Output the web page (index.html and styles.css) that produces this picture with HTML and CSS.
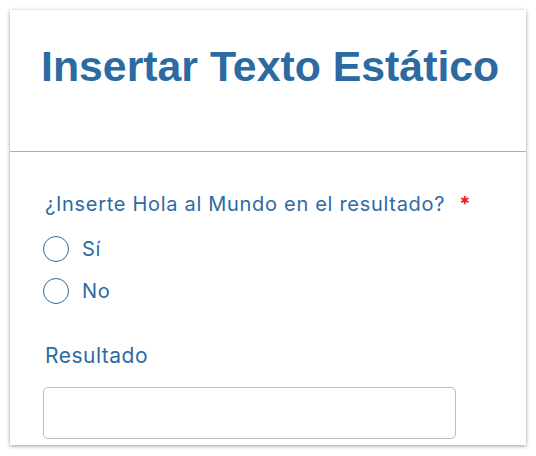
FILE: index.html
```html
<!DOCTYPE html>
<html lang="es">
<head>
<meta charset="utf-8">
<link rel="stylesheet" href="styles.css">
</head>
<body>
<div class="card">
  <header class="card-header">
    <h1 class="title">Insertar Texto Estático</h1>
  </header>
  <section class="card-body">
    <div class="question">¿Inserte Hola al Mundo en el resultado?<span class="req">*</span></div>
    <div class="options">
      <label class="option"><span class="radio"></span><span class="opt-label">Sí</span></label>
      <label class="option"><span class="radio"></span><span class="opt-label">No</span></label>
    </div>
    <div class="field-label">Resultado</div>
    <div class="input"></div>
  </section>
</div>
</body>
</html>
```
FILE: styles.css
```css
html, body {
  margin: 0;
  padding: 0;
  background: #ffffff;
}
body {
  width: 536px;
  height: 456px;
  overflow: hidden;
}
.card {
  margin: 10px 0 0 10px;
  width: 516px;
  height: 435px;
  background: #ffffff;
  box-shadow: 0 1px 4px rgba(0, 0, 0, 0.4);
  overflow: hidden;
}
.card-header {
  box-sizing: border-box;
  height: 142px;
  border-bottom: 1px solid #9cb2c9;
  padding: 31px 0 0 31px;
}
.title {
  margin: 0;
  font-family: "Liberation Sans", Arial, sans-serif;
  font-weight: 700;
  font-size: 42.8px;
  line-height: 50px;
  color: #2c6ba2;
}
.card-body {
  padding: 40px 0 0 35px;
  font-family: Inter, "Noto Sans", sans-serif;
  color: #2f6aa1;
  letter-spacing: 0.7px;
}
.question {
  font-size: 20px;
  line-height: 24px;
}
.req {
  color: #ee1a1a;
  margin-left: 14px;
  font-size: 20px;
  font-weight: 700;
  letter-spacing: 0;
}
.options {
  margin-top: 12px;
  margin-left: -2px;
  display: flex;
  flex-direction: column;
}
.option {
  height: 42px;
  display: flex;
  align-items: center;
  gap: 13px;
}
.radio {
  width: 24px;
  height: 24px;
  border: 1.5px solid #2f6aa1;
  border-radius: 50%;
  flex: none;
}
.opt-label {
  font-size: 20px;
}
.field-label {
  margin-top: 31px;
  font-size: 21px;
  line-height: 26px;
  letter-spacing: 0.5px;
}
.input {
  margin-top: 18px;
  margin-left: -2px;
  width: 411px;
  height: 50px;
  border: 1px solid #bbbac9;
  border-radius: 5px;
}
```
